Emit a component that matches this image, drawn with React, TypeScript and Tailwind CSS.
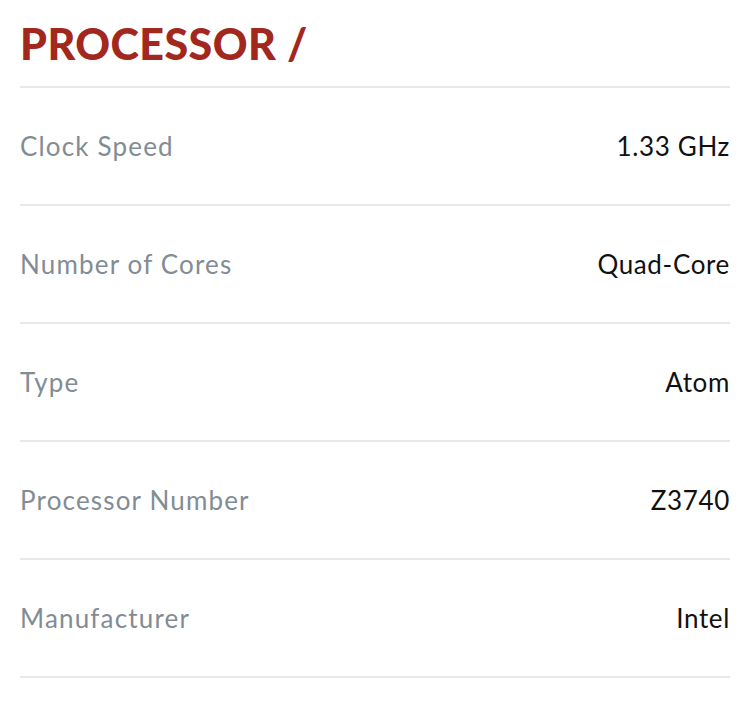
const ROWS = [
  { label: "Clock Speed", value: "1.33 GHz" },
  { label: "Number of Cores", value: "Quad-Core" },
  { label: "Type", value: "Atom" },
  { label: "Processor Number", value: "Z3740" },
  { label: "Manufacturer", value: "Intel" },
];

export default function App() {
  return (
    <div className="min-h-[706px] bg-white px-5 font-['Lato',sans-serif]">
      <h2 className="flex h-[86px] items-center text-[43px] font-black leading-none tracking-[0.01em] text-[#a2271d]">
        PROCESSOR /
      </h2>
      <div className="border-t-2 border-[#e6e8ea]">
        {ROWS.map((r) => (
          <div
            key={r.label}
            className="flex h-[118px] items-center justify-between border-b-2 border-[#e6e8ea]"
          >
            <span className="text-[26px] tracking-[0.045em] text-[#828c95]">{r.label}</span>
            <span className="text-[26px] tracking-[0.025em] text-[#111]">{r.value}</span>
          </div>
        ))}
      </div>
    </div>
  );
}
